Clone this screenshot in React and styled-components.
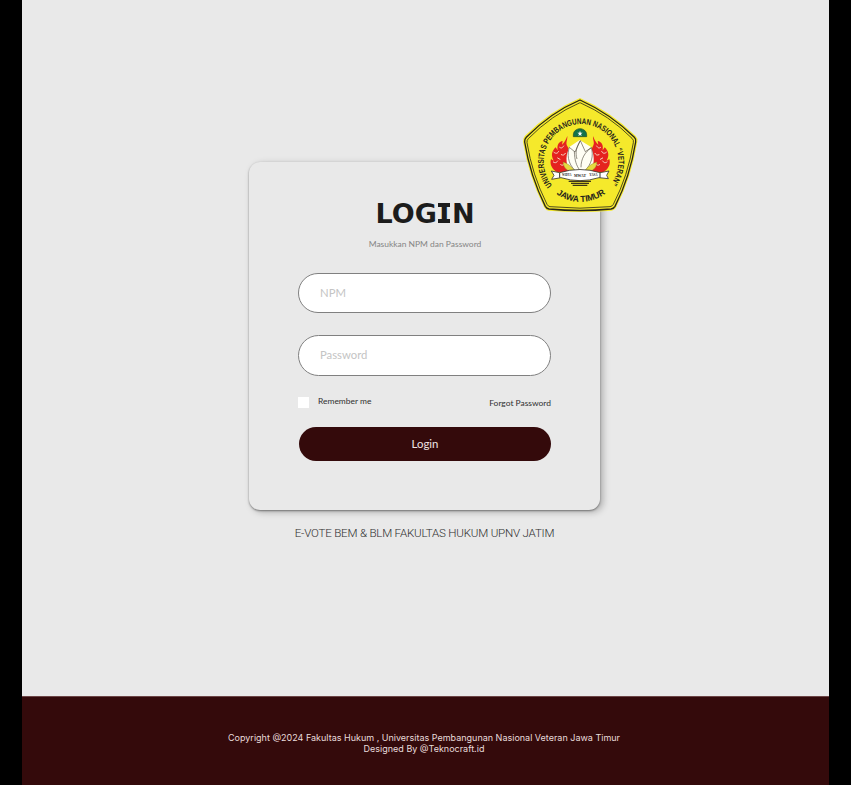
import React from "react";
import styled, { createGlobalStyle } from "styled-components";

const GlobalStyle = createGlobalStyle`
  * { box-sizing: border-box; }
  body { margin: 0; background: #000; }
`;

const Page = styled.div`
  width: 807px;
  height: 785px;
  margin: 0 auto;
  display: flex;
  flex-direction: column;
  background: #e9e9e9;
  overflow: hidden;
`;

const Main = styled.main`
  flex: 1;
  display: flex;
  flex-direction: column;
  align-items: center;
  padding: 162px 2px 0 0;
`;

const Card = styled.form`
  position: relative;
  width: 351px;
  height: 348px;
  padding: 34px 48px 0 49px;
  display: flex;
  flex-direction: column;
  border-radius: 11px;
  background: #e9e9e9;
  box-shadow: 0 1px 2px rgba(0, 0, 0, 0.4), 3px 2px 7px rgba(0, 0, 0, 0.26);
`;

const Logo = styled.svg`
  position: absolute;
  left: 266px;
  top: -72px;
  width: 130px;
  height: 130px;
`;

const Title = styled.h1`
  margin: 0;
  height: 36px;
  font: 700 27px/36px "DejaVu Sans", sans-serif;
  text-align: center;
  color: #1c1c1c;
`;

const SlabLetter = styled.span`
  display: inline-block;
  width: 15px;
  height: 36px;
  line-height: 36px;
  background:
    linear-gradient(#1c1c1c, #1c1c1c) center 7px / 12px 4px no-repeat,
    linear-gradient(#1c1c1c, #1c1c1c) center 23px / 12px 4px no-repeat;
  vertical-align: top;
`;

const Subtitle = styled.p`
  margin: 5px 0 0;
  height: 14px;
  font: 400 8.45px/14px Lato, sans-serif;
  text-align: center;
  color: #858585;
`;

const Field = styled.input`
  width: 253px;
  height: ${(p) => p.$height}px;
  margin-top: 22px;
  padding: 0 21px ${(p) => p.$lift}px;
  border: 1px solid #808080;
  border-radius: 21px;
  background: #fff;
  font: 400 11.3px Lato, sans-serif;
  color: #333;
  outline: none;
  &::placeholder { color: #c4c4c4; opacity: 1; }
`;

const Options = styled.div`
  width: 253px;
  height: 16px;
  margin-top: 18px;
  display: flex;
  justify-content: space-between;
  align-items: flex-start;
  font: 400 8.45px/14px Lato, sans-serif;
  color: #303030;
`;

const Remember = styled.label`
  display: flex;
  gap: 9px;
`;

const Checkbox = styled.input`
  appearance: none;
  width: 11px;
  height: 11px;
  margin: 3px 0 0;
  background: #fff;
`;

const Forgot = styled.a`
  padding-top: 2px;
  color: inherit;
`;

const Submit = styled.button`
  width: 252px;
  height: 34px;
  margin: 17px 0 0 1px;
  padding: 0 0 1px;
  border: 0;
  border-radius: 17px;
  background: #340a0b;
  color: #eee3e3;
  font: 400 11.4px Lato, sans-serif;
`;

const Caption = styled.p`
  margin: 14px 0 0;
  font: 300 11.6px/18px Roboto, sans-serif;
  letter-spacing: -0.22px;
  color: #303030;
`;

const Footer = styled.footer`
  height: 89px;
  padding: 35px 3px 0 0;
  border-top: 1px solid #6c4546;
  background: #340a0b;
  text-align: center;
  font: 400 9px/11px Inter, sans-serif;
  color: #e8dcdc;
`;

function Flames() {
  return (
    <g>
      <path
        d="M157 138C158 151 150 158 158 170C163 179 165 190 159 205L163 246L126 246C112 238 103 224 108 207L116 212C108 197 109 185 122 172L128 181C125 164 132 155 143 153L141 164C149 157 153 149 157 138Z"
        fill="#e5231f"
      />
      <g fill="none" stroke="#f5d8c5" strokeWidth="3" strokeLinecap="round">
        <path d="M134 172c6 5 9 0 12-4M117 187c7 6 12 2 14-3M139 194c6 3 9 1 12-4M115 216c7 5 10 1 13-3M137 224c5 4 9 1 12-3M128 204l7 4" />
      </g>
    </g>
  );
}

function UniversityLogo() {
  return (
    <Logo viewBox="0 0 390 390" aria-label="Universitas Pembangunan Nasional Veteran Jawa Timur">
      <defs>
        <path id="nameArc" d="M112 286A112 112 0 1 1 286 284" />
        <path id="cityArc" d="M119 308A124 124 0 0 0 275 308" />
      </defs>
      <path
        d="M195 24Q287 64 362 138Q369 145 367 155Q350 261 304 351Q299 361 289 362Q195 370 101 362Q92 361 87 351Q40 256 24 155Q23 144 30 137Q105 62 195 24Z"
        fill="#f5e92b"
      />
      <path
        d="M195 30Q286 71 358 142Q364 148 362 156Q345 261 300 349Q296 356 288 357Q195 366 102 357Q95 356 91 349Q45 256 29 156Q28 148 34 142Q106 68 195 30Z"
        fill="none" stroke="#262419" strokeWidth="4"
      />
      <path
        d="M195 38Q282 76 351 145Q357 150 355 158Q339 258 295 343Q292 349 285 350Q195 359 105 350Q99 349 96 343Q51 253 36 158Q35 151 40 146Q109 75 195 38Z"
        fill="none" stroke="#262419" strokeWidth="2.4"
      />
      <g fill="#25231b" fontFamily="Liberation Sans, sans-serif" fontWeight="700">
        <text fontSize="25">
          <textPath href="#nameArc" textLength="500" lengthAdjust="spacingAndGlyphs">
            UNIVERSITAS PEMBANGUNAN NASIONAL “VETERAN”
          </textPath>
        </text>
        <text fontSize="26">
          <textPath href="#cityArc" startOffset="6" textLength="158" lengthAdjust="spacingAndGlyphs">
            JAWA TIMUR
          </textPath>
        </text>
      </g>
      <Flames />
      <g transform="translate(391 0) scale(-1 1)"><Flames /></g>
      <path d="M175 140V135C175 110 215 110 215 135V140Z" fill="#12734b" stroke="#244b24" strokeWidth="2" />
      <path d="M195 122l2 6h6l-5 4 2 6-5-3-5 3 2-6-5-4h6z" fill="#fff" />
      <path
        d="M163 243C150 216 153 192 164 170L194 150L227 170C238 194 240 215 228 243Z"
        fill="#fffef4"
      />
      <g fill="#fffef4" stroke="#4a4335" strokeWidth="1.8" strokeLinejoin="round">
        <path d="M182 243C156 220 157 190 163 172L180 186L196 152L211 185L229 173C236 198 230 222 209 243Z" />
        <path d="M178 184C179 212 184 226 194 240M229 173C209 187 198 207 198 232M196 152C184 171 180 188 186 207" fill="none" />
      </g>
      <path d="M144 216C156 219 170 229 178 241H158Q145 233 144 216ZM246 216C233 219 218 229 211 241H232Q245 233 246 216Z" fill="#e5db40" stroke="#77702c" strokeWidth="1" />
      <path d="M109 243L134 248Q195 229 255 248L282 243L275 256L280 266L252 263Q195 281 138 263L110 268L117 256Z" fill="#fff" stroke="#37352a" strokeWidth="2.5" />
      <path d="M134 248V263M255 248V263" stroke="#37352a" strokeWidth="3" />
      <g fill="#29271f" fontFamily="Liberation Serif, serif" fontWeight="700" fontSize="11">
        <text x="141" y="259" textLength="28" lengthAdjust="spacingAndGlyphs">WIDYA</text>
        <text x="177" y="260" textLength="36" lengthAdjust="spacingAndGlyphs">MWAT</text>
        <text x="223" y="259" textLength="25" lengthAdjust="spacingAndGlyphs">YASA</text>
      </g>
      <path d="M161 274H228M168 280H222M173 286H217" stroke="#3d3619" strokeWidth="4" />
    </Logo>
  );
}

export default function App() {
  return (
    <>
      <GlobalStyle />
      <Page>
        <Main>
          <Card onSubmit={(e) => e.preventDefault()}>
            <Title>LOG<SlabLetter>I</SlabLetter>N</Title>
            <Subtitle>Masukkan NPM dan Password</Subtitle>
            <Field $height={40} $lift={1} type="text" placeholder="NPM" />
            <Field $height={41} $lift={2} type="password" placeholder="Password" />
            <Options>
              <Remember>
                <Checkbox type="checkbox" />
                Remember me
              </Remember>
              <Forgot>Forgot Password</Forgot>
            </Options>
            <Submit type="submit">Login</Submit>
            <UniversityLogo />
          </Card>
          <Caption>E-VOTE BEM &amp; BLM FAKULTAS HUKUM UPNV JATIM</Caption>
        </Main>
        <Footer>
          Copyright @2024 Fakultas Hukum , Universitas Pembangunan Nasional Veteran Jawa Timur
          <br />
          Designed By @Teknocraft.id
        </Footer>
      </Page>
    </>
  );
}
